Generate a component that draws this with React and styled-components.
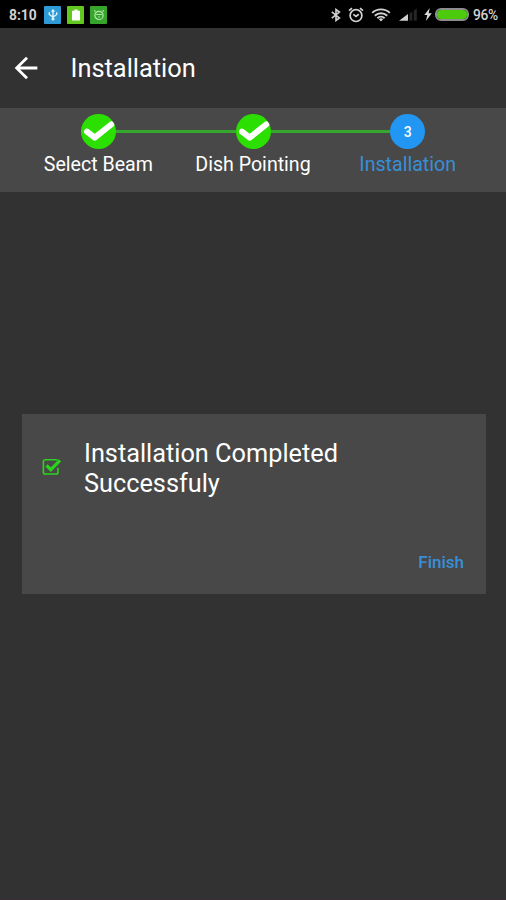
import styled, { createGlobalStyle } from "styled-components";
import { MdArrowBack } from "react-icons/md";

const steps = [
  { label: "Select Beam", done: true },
  { label: "Dish Pointing", done: true },
  { label: "Installation", done: false },
];

export default function App() {
  return (
    <Screen>
      <GlobalStyle />
      <StatusBar />
      <Header>
        <BackButton aria-label="Back">
          <MdArrowBack size={34} />
        </BackButton>
        <Title>Installation</Title>
      </Header>
      <Stepper>
        {steps.map((step, index) => (
          <Step key={step.label}>
            <Track>
              <Line $visible={index > 0} />
              <Circle $done={step.done}>
                {step.done ? <CheckMark /> : index + 1}
              </Circle>
              <Line $visible={index < steps.length - 1} />
            </Track>
            <StepLabel $active={!step.done}>{step.label}</StepLabel>
          </Step>
        ))}
      </Stepper>
      <Content>
        <Card>
          <CardBody>
            <CheckBoxIcon />
            <Message>Installation Completed Successfuly</Message>
          </CardBody>
          <CardActions>
            <FinishButton>Finish</FinishButton>
          </CardActions>
        </Card>
      </Content>
    </Screen>
  );
}

function StatusBar() {
  return (
    <Bar>
      <Clock>8:10</Clock>
      <Notifications>
        <AppBadge $color="#2f9bd6">
          <svg width="12" height="12" viewBox="0 0 12 12" fill="none" stroke="#e4f3fb" strokeWidth="1.4">
            <path d="M6 1v10M2.3 3.2v2.3L6 8.2l3.7-2.7V3.2M4.6 2.6 6 1l1.4 1.6" />
            <circle cx="6" cy="10" r="0.8" />
          </svg>
        </AppBadge>
        <AppBadge $color="#62c71e">
          <svg width="12" height="12" viewBox="0 0 12 12" fill="#fff">
            <path d="M4.4 0.6h3.2v1.2H10v9.7H2V1.8h2.4z" />
          </svg>
        </AppBadge>
        <AppBadge $color="#35a52b">
          <svg width="12" height="12" viewBox="0 0 12 12" fill="none" stroke="#b9e6ae" strokeWidth="1.2">
            <circle cx="6" cy="6.4" r="4.1" />
            <path d="M2.4 2.6 1.3 1.2M9.6 2.6l1.1-1.4M3.2 5.5h5.6M6 7.3v1.2" />
          </svg>
        </AppBadge>
      </Notifications>
      <Indicators>
        <Radios>
          <BluetoothIcon />
          <AlarmIcon />
          <WifiIcon />
        </Radios>
        <SignalIcon />
        <BoltIcon />
        <Battery>
          <BatteryLevel />
        </Battery>
        <Percent>96%</Percent>
      </Indicators>
    </Bar>
  );
}

function CheckMark() {
  return (
    <svg width="35" height="35" viewBox="0 0 35 35" fill="none">
      <path d="M6 17.6 13.7 23.6 30.2 10.5" stroke="#fff" strokeWidth="6" strokeLinecap="round" strokeLinejoin="round" />
    </svg>
  );
}

function CheckBoxIcon() {
  return (
    <svg width="20" height="18" viewBox="0 0 20 18" fill="none" stroke="#2bd41c">
      <path d="M16 9.8v4.4a1.8 1.8 0 0 1-1.8 1.8H3.2a1.8 1.8 0 0 1-1.8-1.8V3.6a1.8 1.8 0 0 1 1.8-1.8h11a1.8 1.8 0 0 1 1.2 0.5" strokeWidth="1.6" />
      <path d="m4.5 7.3 4.3 4.3 9.2-9.2" strokeWidth="3.3" />
    </svg>
  );
}

function BluetoothIcon() {
  return (
    <svg width="10" height="14" viewBox="0 0 10 14" fill="none" stroke="#d2d2d2" strokeWidth="1.6">
      <path d="M0.8 3.8 8.4 10 5 12.5v-11L8.4 4 0.8 10.2" />
    </svg>
  );
}

function AlarmIcon() {
  return (
    <svg width="16" height="16" viewBox="0 0 16 16" fill="none" stroke="#d2d2d2" strokeWidth="1.7">
      <circle cx="8" cy="8.6" r="5.9" />
      <path d="M1 3.7 4 1.2M15 3.7l-3-2.5M5.3 7.3 8 9.4l2.8-2.1" />
    </svg>
  );
}

function WifiIcon() {
  return (
    <svg width="20" height="14" viewBox="0 0 20 14" fill="none" stroke="#d2d2d2" strokeWidth="1.9">
      <path d="M1.2 4.9a12.8 12.8 0 0 1 17.6 0M3.8 7.7a9 9 0 0 1 12.4 0M6.4 10.2a5.2 5.2 0 0 1 7.2 0" />
      <path d="M7.8 11.2 10 13.6l2.2-2.4a3.2 3.2 0 0 0-4.4 0z" fill="#d2d2d2" stroke="none" />
    </svg>
  );
}

function SignalIcon() {
  return (
    <svg width="19" height="13" viewBox="0 0 19 13">
      <path d="M0 12.7 9 6v6.7z" fill="#cfcfcf" />
      <path d="M10.5 5.5 13.3 3.5v9.2h-2.8zM14.8 2.5l3-2v12.2h-3z" fill="#262626" />
    </svg>
  );
}

function BoltIcon() {
  return (
    <svg width="8" height="13" viewBox="0 0 8 13" fill="#dcdcdc">
      <path d="M5.8 0 0.3 7h3L1.9 13 7.8 5.3H4.6z" />
    </svg>
  );
}

const GlobalStyle = createGlobalStyle`
  * {
    box-sizing: border-box;
  }
  body {
    margin: 0;
    background-color: #323232;
  }
  svg {
    display: block;
    flex-shrink: 0;
  }
  button {
    padding: 0;
    border: none;
    background: none;
    font-family: inherit;
  }
`;

const Screen = styled.div`
  display: flex;
  flex-direction: column;
  width: 506px;
  height: 900px;
  background-color: #323232;
  border-bottom: 1px solid #3a2d33;
  color: #ffffff;
  font-family: Roboto, sans-serif;
`;

const Bar = styled.div`
  display: flex;
  align-items: center;
  height: 28px;
  padding: 1px 8px 0 9px;
  background-color: #000000;
  color: #d2d2d2;
`;

const Clock = styled.span`
  width: 35px;
  font-size: 13.8px;
  font-weight: 700;
  line-height: 16px;
`;

const Notifications = styled.div`
  display: flex;
  gap: 6px;
`;

const AppBadge = styled.span`
  display: flex;
  align-items: center;
  justify-content: center;
  width: 17px;
  height: 18px;
  border-radius: 1px;
  background-color: ${(props) => props.$color};
`;

const Indicators = styled.div`
  display: flex;
  align-items: center;
  margin-left: auto;
  gap: 6px;
`;

const Radios = styled.div`
  display: flex;
  align-items: center;
  gap: 7px;
  margin-right: 2px;
`;

const Battery = styled.span`
  width: 34px;
  height: 13px;
  margin-left: -3px;
  border: 2px solid #8d8d8d;
  border-radius: 6px;
`;

const BatteryLevel = styled.span`
  display: block;
  height: 100%;
  border-radius: 4px;
  background-color: #4bcb0b;
`;

const Percent = styled.span`
  width: 25px;
  margin-left: -2px;
  font-size: 13.8px;
  font-weight: 500;
  line-height: 16px;
  letter-spacing: -0.4px;
`;

const Header = styled.header`
  display: flex;
  align-items: center;
  height: 79.5px;
  padding: 1px 9px 0;
`;

const BackButton = styled.button`
  width: 61.5px;
  color: #ffffff;
`;

const Title = styled.h1`
  margin: 0;
  font-size: 25.4px;
  font-weight: 400;
  line-height: 30px;
`;

const Stepper = styled.div`
  display: flex;
  height: 84.5px;
  padding: 6.5px 21px 0;
  background-color: #484848;
`;

const Step = styled.div`
  flex: 1;
  display: flex;
  flex-direction: column;
  align-items: center;
`;

const Track = styled.div`
  display: flex;
  align-items: center;
  width: 100%;
`;

const Line = styled.span`
  flex: 1;
  height: 3px;
  background-color: ${(props) => (props.$visible ? "#36a82e" : "transparent")};
`;

const Circle = styled.span`
  display: flex;
  align-items: center;
  justify-content: center;
  width: 35px;
  height: 35px;
  border-radius: 50%;
  background-color: ${(props) => (props.$done ? "#2be000" : "#2196f3")};
  font-size: 14px;
  font-weight: 500;
`;

const StepLabel = styled.span`
  margin-top: 4px;
  color: ${(props) => (props.$active ? "#388fd8" : "#ffffff")};
  font-size: 19.6px;
  line-height: 24px;
`;

const Content = styled.main`
  padding: 222px 20px 0 22px;
`;

const Card = styled.section`
  display: flex;
  flex-direction: column;
  justify-content: space-between;
  height: 180px;
  padding: 25px 22px 20px 20px;
  background-color: #484848;
`;

const CardBody = styled.div`
  display: flex;
  gap: 22px;

  svg {
    margin-top: 19px;
  }
`;

const Message = styled.p`
  width: 290px;
  margin: 0;
  font-size: 25.3px;
  line-height: 30px;
`;

const CardActions = styled.div`
  display: flex;
  justify-content: flex-end;
`;

const FinishButton = styled.button`
  color: #388fd8;
  font-size: 17px;
  font-weight: 500;
  line-height: 24px;
`;
